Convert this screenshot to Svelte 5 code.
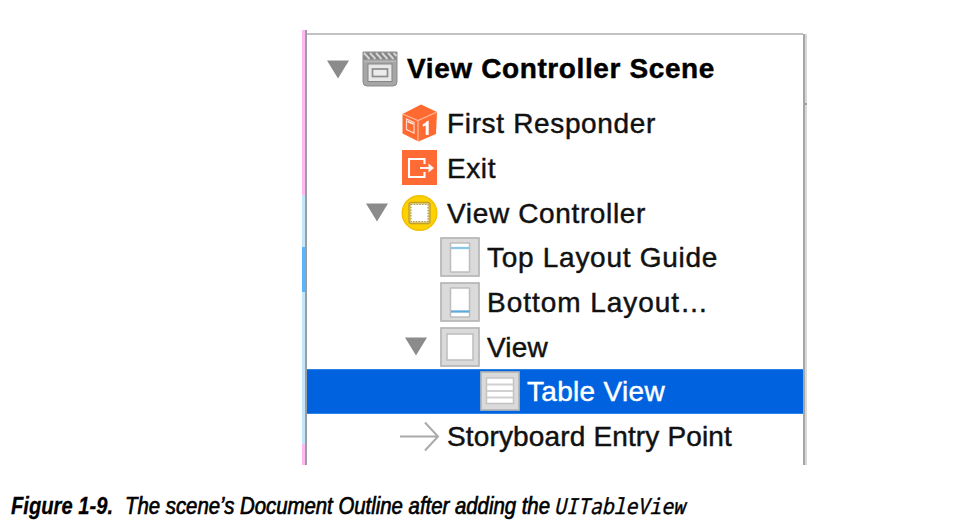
<script>
  const rows = [
    { label: 'First Responder', icon: 'cube', indent: 94, width: 209 },
    { label: 'Exit', icon: 'exit', indent: 94, width: 49 },
    { label: 'View Controller', icon: 'controller', indent: 94, width: 199, open: true },
    { label: 'Top Layout Guide', icon: 'top', indent: 133, width: 231 },
    { label: 'Bottom Layout…', icon: 'bottom', indent: 133, width: 222 },
    { label: 'View', icon: 'view', indent: 133, width: 61, open: true },
    { label: 'Table View', icon: 'table', indent: 173, width: 138, selected: true },
    { label: 'Storyboard Entry Point', icon: 'arrow', indent: 94, width: 285 }
  ];

  // Distributes the difference to the wanted width between the letters.
  function track(node, width) {
    const natural = node.getBoundingClientRect().width;
    node.style.letterSpacing = `${(width - natural) / node.textContent.length}px`;
  }

  // Condenses a run of text to the wanted width.
  function condense(node, width) {
    const natural = node.getBoundingClientRect().width;
    node.style.transform = `scaleX(${width / natural})`;
  }
</script>

{#snippet triangle()}
  <svg class="triangle" width="22" height="19" viewBox="0 0 22 19"><path d="M0 .5H22L11 18.5Z" fill="#8b8b8b" /></svg>
{/snippet}

<main>
  <section class="outline">
    <div class="strip"><i class="pink a"></i><i class="pale b"></i><i class="blue c"></i><i class="pale d"></i><i class="pink e"></i></div>
    <div class="panel">
      <div class="row heading">
        {@render triangle()}
        <svg class="scene" width="36" height="36" viewBox="0 0 36 36">
          <path d="M1 1H35V31Q35 35 31 35H5Q1 35 1 31Z" fill="#a6a6a6" stroke="#8b8b8b" />
          <path d="M1.5 1.5H34.500V8.500H1.500Z" fill="#858585" />
          <path d="M2 2 7.500 8M8 2 13.500 8M14 2 19.500 8M20 2 25.500 8M26 2 31.500 8M31.500 2 34.500 5" stroke="#d4d4d4" stroke-width="2" />
          <path d="M2 10.500H34" stroke="#b8b8b8" />
          <rect x="6" y="13" width="24" height="17.500" fill="#e8e8e8" stroke="#858585" />
          <rect x="10.500" y="18" width="15" height="7.500" fill="#ececec" stroke="#8d8d8d" stroke-width="1.700" />
        </svg>
        <span class="label bold" use:track={308}>View Controller Scene</span>
      </div>
      {#each rows as row}
        <div class="row" class:selected={row.selected} style:padding-left="{row.indent}px">
          {#if row.open}<span class="toggle">{@render triangle()}</span>{/if}
          <svg class="icon" class:small={row.indent === 94} viewBox={row.indent === 94 ? '0 0 38 40' : '0 0 40 40'}>
            {#if row.icon === 'cube'}
              <path d="M20 1.500 36 9 35 31 17.500 38.500 1.500 30.500V11Z" fill="#ff6a31" />
              <path d="M1.500 11 17 17.500 36 9M17 17.500V38" fill="none" stroke="#ffb79d" stroke-width="1.300" />
              <path d="M5.500 16 13 19.500V30L5.500 26.500Z" fill="none" stroke="#ffd9cb" stroke-width="1.200" />
              <path d="M6.500 18.300 12 20.800" stroke="#fff" stroke-width="1.300" />
              <path d="M27.700 17.500V32H24.700V22.500L21.800 23.800V21.300Q24.600 20 25.500 18.400Z" fill="#fff" />
            {:else if row.icon === 'exit'}
              <rect x="1" y="2" width="35" height="35" fill="#ff6a35" />
              <path d="M23.500 16V11H8V29H23.500V24" fill="none" stroke="#fff" stroke-width="2.100" />
              <path d="M19 20H30" stroke="#fff" stroke-width="1.800" /><path d="M27.500 15.500 33 20 27.500 24.500Z" fill="#fff" />
            {:else if row.icon === 'controller'}
              <circle cx="18.500" cy="20" r="17.300" fill="#ffd100" stroke="#f1bf00" stroke-width="1.400" />
              <rect x="8" y="9.500" width="21" height="21" rx="2" fill="#e6d583" stroke="#c2a12c" stroke-width="1.400" />
              <rect x="10" y="11.500" width="17" height="17" fill="#fff" stroke="#a79960" stroke-width="1.200" stroke-dasharray="1.400 1.400" />
            {:else if row.icon === 'arrow'}
              <path d="M-1 20.500H36M24 6.500 37 20.500 24 34.500" fill="none" stroke="#aaa" stroke-width="2" />
            {:else}
              <rect x="1" y="1" width="38" height="38" fill="#dadada" stroke="#b5b5b5" stroke-width="1.700" />
              {#if row.icon === 'top' || row.icon === 'bottom'}
                <rect x="10.500" y="6" width="19" height="29" fill="#fff" stroke="#bdbdbd" stroke-width="1.500" />
                <path d={row.icon === 'top' ? 'M11 11H29.500' : 'M11 29.500H29.500'} stroke={row.icon === 'top' ? '#8ac6e8' : '#60a9db'} stroke-width="2.300" />
              {:else if row.icon === 'view'}
                <rect x="7" y="7" width="26" height="26" fill="#fff" stroke="#bdbdbd" stroke-width="1.500" />
              {:else}
                <rect x="6.500" y="7" width="27" height="25.500" fill="#fff" stroke="#c3c3c3" stroke-width="1.500" />
                <path d="M7 13.500H33M7 20H33M7 26.500H33" stroke="#d0d0d0" stroke-width="1.800" />
              {/if}
            {/if}
          </svg>
          <span class="label" use:track={row.width}>{row.label}</span>
        </div>
      {/each}
    </div>
    <div class="edge"><i></i></div>
  </section>
  <p class="caption">
    <span class="run number"><b use:condense={102}>Figure 1-9.</b></span>
    <span class="run title"><span use:condense={425}>The scene’s Document Outline after adding the</span></span>
    <span class="run code"><code use:condense={131}>UITableView</code></span>
  </p>
</main>

<style>
  :global(body) { margin: 0; background: #fff; }
  main { width: 968px; height: 524px; overflow: hidden; box-sizing: border-box; padding-top: 30px; font-family: "Liberation Sans", Arial, sans-serif; color: #111; }
  .outline { display: flex; height: 435px; width: 505px; margin-left: 302px; }
  .strip { width: 3px; display: flex; flex-direction: column; }
  .pink { background: #ffb7f6; }
  .pale { background: #c3e6ff; }
  .blue { background: #5bb5fb; }
  .a { height: 165px; } .b { height: 52px; } .c { height: 45px; } .d { height: 152px; } .e { height: 21px; }
  .panel { flex: 1; box-sizing: border-box; border-left: 2px solid #9d9d9d; padding-top: 3px; }
  .row { position: relative; display: flex; align-items: center; height: 44.7px; box-sizing: border-box; }
  .heading { height: 67.800px; padding-left: 20px; padding-top: 3px; border-top: 2.500px solid #c2c2c2; color: #000; }
  .scene { margin: 0 9px 0 13px; }
  .label { font-size: 28px; line-height: 40px; white-space: nowrap; flex: none; -webkit-text-stroke: .45px; }
  .icon + .label { padding-top: 2px; }
  .bold { font-weight: 700; }
  .icon { width: 40px; height: 40px; flex: none; margin-right: 7px; overflow: visible; }
  .icon.small { width: 38px; margin-right: 8px; }
  .toggle { position: absolute; margin-left: -35px; display: flex; }
  .selected { background: #0062df; color: #fff; box-shadow: inset 0 1px #2b83e8, inset 0 -1px #2b83e8; }
  .edge { width: 4px; border-left: 2px solid #a6a6a6; box-sizing: border-box; background: #d8d8d8; margin-top: 4px; }
  .edge i { display: block; width: 2px; height: 2px; margin-top: 69px; background: #9d9d9d; }
  .caption { display: flex; align-items: baseline; margin: 27px 0 0 11px; height: 30px; font-size: 23px; line-height: 27px; font-style: italic; color: #000; white-space: nowrap; }
  .run > * { display: inline-block; transform-origin: left; }
  .number { width: 114px; -webkit-text-stroke: .3px; }
  .title { width: 429px; -webkit-text-stroke: .7px; }
  .code { width: 133px; -webkit-text-stroke: .4px; }
  code { font-family: "Noto Sans Mono", "DejaVu Sans Mono", monospace; font-size: 22px; }
</style>
